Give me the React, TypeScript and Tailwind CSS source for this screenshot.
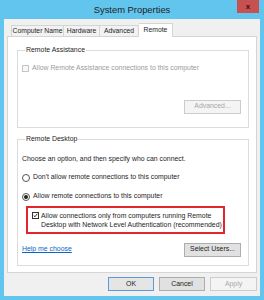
import React from "react";

const font = { fontFamily: '"Liberation Sans", Arial, sans-serif' };

function Btn({ children, w = "w-[57px]", def = false, disabled = false }: { children: React.ReactNode; w?: string; def?: boolean; disabled?: boolean }) {
  return (
    <div
      className={`${w} h-[14px] flex items-center justify-center text-[6.9px] leading-none whitespace-nowrap border ${
        disabled
          ? "bg-[#f4f4f4] border-[#cccccc] text-[#a8a8a8]"
          : def
          ? "bg-[#e5e5e5] border-[#5a9ad8] text-[#222]"
          : "bg-[#e1e1e1] border-[#adadad] text-[#222]"
      }`}
    >
      {children}
    </div>
  );
}

function Check({ checked = false, disabled = false }: { checked?: boolean; disabled?: boolean }) {
  return (
    <div
      className={`w-[7px] h-[7px] shrink-0 border flex items-center justify-center ${
        disabled ? "border-[#c4c4c4] bg-[#f7f7f7]" : "border-[#333] bg-white"
      }`}
    >
      {checked && (
        <svg width="7" height="7" viewBox="0 0 7 7">
          <path d="M1 3.5 L2.8 5.3 L6 1" fill="none" stroke="#222" strokeWidth="1.3" />
        </svg>
      )}
    </div>
  );
}

function Radio({ on = false }: { on?: boolean }) {
  return (
    <div className="w-[8px] h-[8px] shrink-0 rounded-full border border-[#555] bg-white flex items-center justify-center">
      {on && <div className="w-[4px] h-[4px] rounded-full bg-[#222]" />}
    </div>
  );
}

export default function App() {
  return (
    <div className="w-[264px] h-[300px] bg-[#62c5ee] flex flex-col px-[4px] pb-[4px] text-[#1e1e1e] whitespace-nowrap" style={font}>
      {/* title bar */}
      <div className="h-[19px] shrink-0 flex items-start relative">
        <div className="flex-1 text-center text-[9.4px] leading-none pt-[5px] text-[#222]">System Properties</div>
        <div className="absolute right-[1px] top-0 w-[22px] h-[13px] bg-[#c75050] flex items-center justify-center text-[8px] font-bold text-[#3a1010] leading-none">
          x
        </div>
      </div>
      {/* body */}
      <div className="flex-1 bg-[#f0f0f0] flex flex-col px-[3px]">
        {/* tabs */}
        <div className="h-[17px] flex items-end pl-[4px] shrink-0">
          <div className="w-[53px] h-[11px] border border-b-0 border-[#d5d5d5] bg-[#f2f2f2] text-[6.8px] leading-none flex items-center justify-center">Computer Name</div>
          <div className="w-[36px] h-[11px] border border-b-0 border-l-0 border-[#d5d5d5] bg-[#f2f2f2] text-[6.8px] leading-none flex items-center justify-center">Hardware</div>
          <div className="w-[39px] h-[11px] border border-b-0 border-l-0 border-[#d5d5d5] bg-[#f2f2f2] text-[6.8px] leading-none flex items-center justify-center">Advanced</div>
          <div className="w-[34px] h-[14px] -mb-[1px] relative z-10 border border-b-0 border-l-0 border-[#d5d5d5] bg-white text-[6.8px] leading-none flex items-start pt-[3px] justify-center">Remote</div>
        </div>
        {/* panel */}
        <div className="h-[237px] shrink-0 bg-white border border-[#d5d5d5] flex flex-col pl-[9px] pr-[7px] pt-[10px] gap-[8px]">
          <fieldset className="border border-[#dcdcdc] h-[81px] pl-[4px] pr-[7px] flex flex-col">
            <legend className="text-[6.9px] leading-none px-[1px] ml-[3px]">Remote Assistance</legend>
            <div className="flex items-center gap-[3px] mt-[11px]">
              <Check disabled />
              <span className="text-[6.9px] leading-none text-[#9a9a9a]">Allow Remote Assistance connections to this computer</span>
            </div>
            <div className="flex justify-end mt-[28px]">
              <Btn disabled>Advanced...</Btn>
            </div>
          </fieldset>
          <fieldset className="border border-[#dcdcdc] h-[130px] pl-[4px] pr-[7px] flex flex-col">
            <legend className="text-[6.9px] leading-none px-[1px] ml-[3px]">Remote Desktop</legend>
            <div className="text-[6.9px] leading-none mt-[13px]">Choose an option, and then specify who can connect.</div>
            <div className="flex items-center gap-[3px] mt-[11px]">
              <Radio />
              <span className="text-[6.9px] leading-none">Don&apos;t allow remote connections to this computer</span>
            </div>
            <div className="flex items-center gap-[3px] mt-[11px]">
              <Radio on />
              <span className="text-[6.9px] leading-none">Allow remote connections to this computer</span>
            </div>
            <div className="ml-[4px] mt-[5px] w-[199px] h-[28px] border-2 border-[#e3262d] flex items-start pl-[4px] pt-[3px] gap-[2px]">
              <div className="mt-[1px]">
                <Check checked />
              </div>
              <span className="text-[6.9px] leading-[9px]">
                Allow connections only from computers running Remote
                <br />
                Desktop with Network Level Authentication (recommended)
              </span>
            </div>
            <div className="flex items-center justify-between mt-[9px]">
              <span className="text-[6.9px] leading-none text-[#0b63c4] underline">Help me choose</span>
              <Btn>Select Users...</Btn>
            </div>
          </fieldset>
        </div>
        {/* bottom buttons */}
        <div className="flex justify-end gap-[5px] pt-[4px] pr-[0px]">
          <Btn w="w-[46px]" def>OK</Btn>
          <Btn w="w-[46px]">Cancel</Btn>
          <Btn w="w-[47px]" disabled>Apply</Btn>
        </div>
      </div>
    </div>
  );
}
